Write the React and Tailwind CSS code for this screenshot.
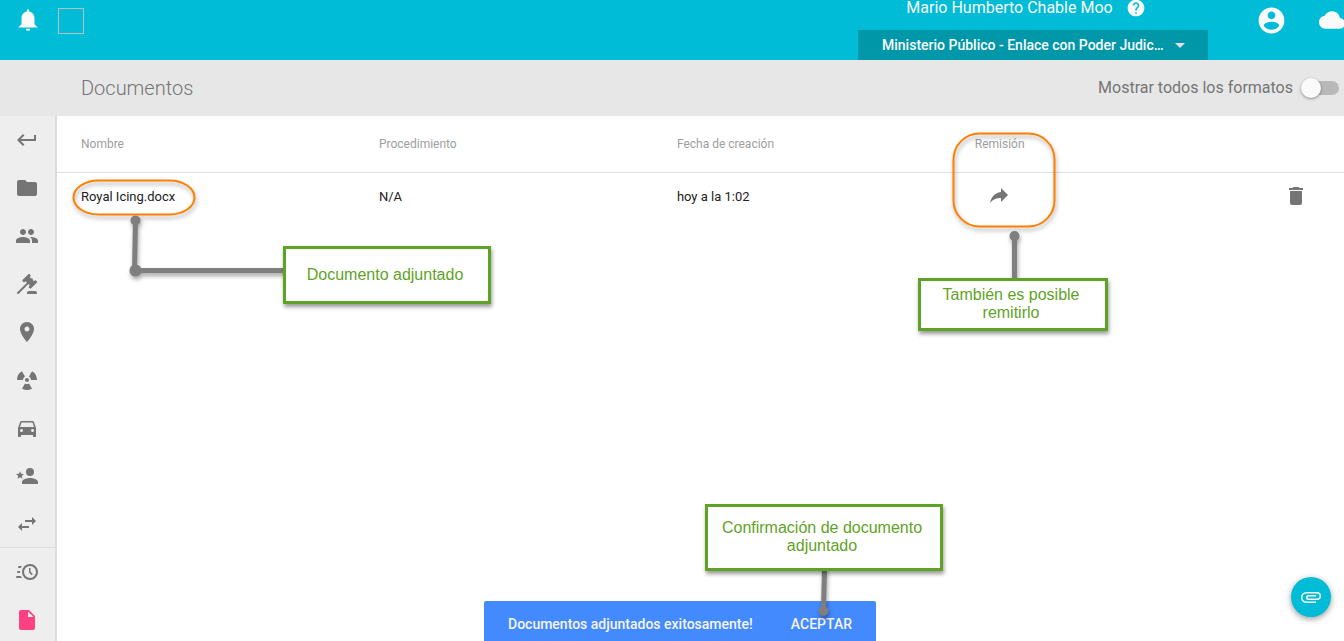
import React from "react";

const PATHS = {
  bell: "M14,20A2,2 0 0,1 12,22A2,2 0 0,1 10,20H14M12,2A1,1 0 0,1 13,3V4.08C15.84,4.56 18,7.03 18,10V16L21,19H3L6,16V10C6,7.03 8.16,4.56 11,4.08V3A1,1 0 0,1 12,2Z",
  help: "M12 2C6.48 2 2 6.48 2 12s4.48 10 10 10 10-4.48 10-10S17.52 2 12 2zm1 17h-2v-2h2v2zm2.07-7.75l-.9.92C13.45 12.9 13 13.5 13 15h-2v-.5c0-1.1.45-2.1 1.17-2.83l1.24-1.26c.37-.36.59-.86.59-1.41 0-1.1-.9-2-2-2s-2 .9-2 2H8c0-2.21 1.79-4 4-4s4 1.79 4 4c0 .88-.36 1.68-.93 2.25z",
  account: "M12 2C6.48 2 2 6.48 2 12s4.48 10 10 10 10-4.48 10-10S17.52 2 12 2zm0 3c1.66 0 3 1.34 3 3s-1.34 3-3 3-3-1.34-3-3 1.34-3 3-3zm0 14.2c-2.5 0-4.71-1.28-6-3.22.03-1.99 4-3.08 6-3.08 1.99 0 5.97 1.09 6 3.08-1.29 1.94-3.5 3.22-6 3.22z",
  cloud: "M19.35 10.04C18.67 6.59 15.64 4 12 4 9.11 4 6.6 5.64 5.35 8.04 2.34 8.36 0 10.91 0 14c0 3.31 2.69 6 6 6h13c2.76 0 5-2.24 5-5 0-2.64-2.05-4.78-4.65-4.96z",
  enter: "M19 7v4H5.83l3.58-3.59L8 6l-6 6 6 6 1.41-1.41L5.83 13H21V7z",
  folder: "M10 4H4c-1.1 0-1.99.9-1.99 2L2 18c0 1.1.9 2 2 2h16c1.1 0 2-.9 2-2V8c0-1.1-.9-2-2-2h-8l-2-2z",
  people: "M16 11c1.66 0 2.99-1.34 2.99-3S17.66 5 16 5c-1.66 0-3 1.34-3 3s1.34 3 3 3zm-8 0c1.66 0 2.99-1.34 2.99-3S9.66 5 8 5C6.34 5 5 6.34 5 8s1.34 3 3 3zm0 2c-2.33 0-7 1.17-7 3.5V19h14v-2.5c0-2.33-4.67-3.5-7-3.5zm8 0c-.29 0-.62.02-.97.05 1.16.84 1.97 1.97 1.97 3.45V19h6v-2.5c0-2.33-4.67-3.5-7-3.5z",
  gavel: "M2.3,20.28L11.9,10.68L10.5,9.26L9.78,9.97C9.39,10.36 8.76,10.36 8.37,9.97L7.66,9.26C7.27,8.87 7.27,8.24 7.66,7.85L13.32,2.19C13.71,1.8 14.34,1.8 14.73,2.19L15.44,2.9C15.83,3.29 15.83,3.92 15.44,4.31L14.73,5L16.15,6.43C16.54,6.04 17.17,6.04 17.56,6.43C17.95,6.82 17.95,7.46 17.56,7.85L18.97,9.26L19.68,8.55C20.07,8.16 20.71,8.16 21.1,8.55L21.8,9.26C22.19,9.65 22.19,10.29 21.8,10.68L16.14,16.34C15.75,16.73 15.12,16.73 14.73,16.34L14.03,15.63C13.63,15.24 13.63,14.6 14.03,14.21L14.73,13.5L13.32,12.09L3.71,21.7C3.32,22.09 2.69,22.09 2.3,21.7C1.91,21.31 1.91,20.67 2.3,20.28M20,19A2,2 0 0,1 22,21V22H12V21A2,2 0 0,1 14,19H20Z",
  place: "M12 2C8.13 2 5 5.13 5 9c0 5.25 7 13 7 13s7-7.75 7-13c0-3.87-3.13-7-7-7zm0 9.5c-1.38 0-2.5-1.12-2.5-2.5s1.12-2.5 2.5-2.5 2.5 1.12 2.5 2.5-1.12 2.5-2.5 2.5z",
  radioactive: "M12,10A2,2 0 1,1 12,14A2,2 0 1,1 12,10ZM22,12A10,10 0 0,0 17,3.34L14,8.54A4,4 0 0,1 16,12ZM2,12A10,10 0 0,1 7,3.34L10,8.54A4,4 0 0,0 8,12ZM7,20.66A10,10 0 0,0 17,20.66L14,15.46A4,4 0 0,1 10,15.46Z",
  car: "M18.92 6.01C18.72 5.42 18.16 5 17.5 5h-11c-.66 0-1.21.42-1.42 1.01L3 12v8c0 .55.45 1 1 1h1c.55 0 1-.45 1-1v-1h12v1c0 .55.45 1 1 1h1c.55 0 1-.45 1-1v-8l-2.08-5.99zM6.5 16c-.83 0-1.5-.67-1.5-1.5S5.67 13 6.5 13s1.5.67 1.5 1.5S7.33 16 6.5 16zm11 0c-.83 0-1.5-.67-1.5-1.5s.67-1.5 1.5-1.5 1.5.67 1.5 1.5-.67 1.5-1.5 1.5zM5 11l1.5-4.5h11L19 11H5z",
  accountStar: "M15,14C12.33,14 7,15.33 7,18V20H23V18C23,15.33 17.67,14 15,14M15,12A4,4 0 0,0 19,8A4,4 0 0,0 15,4A4,4 0 0,0 11,8A4,4 0 0,0 15,12M5,13.28L7.45,14.77L6.8,11.96L9,10.08L6.11,9.83L5,7.19L3.87,9.83L1,10.08L3.18,11.96L2.5,14.77L5,13.28Z",
  swap: "M21,9L17,5V8H10V10H17V13M7,11L3,15L7,19V16H14V14H7V11Z",
  clockFast: "M15,4A8,8 0 0,1 23,12A8,8 0 0,1 15,20A8,8 0 0,1 7,12A8,8 0 0,1 15,4M15,6A6,6 0 0,0 9,12A6,6 0 0,0 15,18A6,6 0 0,0 21,12A6,6 0 0,0 15,6M14,8H15.5V11.78L17.83,14.11L16.77,15.17L14,12.4V8M2,18A1,1 0 0,1 1,17A1,1 0 0,1 2,16H5.83C6.14,16.71 6.54,17.38 7,18H2M3,13A1,1 0 0,1 2,12A1,1 0 0,1 3,11H5.05L5,12L5.05,13H3M4,8A1,1 0 0,1 3,7A1,1 0 0,1 4,6H7C6.54,6.62 6.14,7.29 5.83,8H4Z",
  file: "M13,9V3.5L18.5,9M6,2C4.89,2 4,2.89 4,4V20A2,2 0 0,0 6,22H18A2,2 0 0,0 20,20V8L14,2H6Z",
  share: "M21,11L14,4V8C7,9 4,14 3,19C5.5,15.5 9,13.9 14,13.9V18L21,11Z",
  trash: "M19,4H15.5L14.5,3H9.5L8.5,4H5V6H19M6,19A2,2 0 0,0 8,21H16A2,2 0 0,0 18,19V7H6V19Z",
  attachment: "M7.5,18A5.5,5.5 0 0,1 2,12.5A5.5,5.5 0 0,1 7.5,7H18A4,4 0 0,1 22,11A4,4 0 0,1 18,15H9.5A2.5,2.5 0 0,1 7,12.5A2.5,2.5 0 0,1 9.5,10H17V11.5H9.5A1,1 0 0,0 8.5,12.5A1,1 0 0,0 9.5,13.5H18A2.5,2.5 0 0,0 20.5,11A2.5,2.5 0 0,0 18,8.5H7.5A4,4 0 0,0 3.5,12.5A4,4 0 0,0 7.5,16.5H17V18H7.5Z",
};

function Icon({ name, className = "size-6" }) {
  return (
    <svg viewBox="0 0 24 24" fill="currentColor" aria-hidden="true" className={`block shrink-0 ${className}`}>
      <path d={PATHS[name]} />
    </svg>
  );
}

const NAV = [
  ["enter", "Regresar"],
  ["folder", "Carpeta"],
  ["people", "Personas"],
  ["gavel", "Delitos"],
  ["place", "Lugares"],
  ["radioactive", "Evidencias"],
  ["car", "Vehículos"],
  ["accountStar", "Entrevistas"],
  ["swap", "Relaciones"],
  ["clockFast", "Actuaciones"],
  ["file", "Documentos"],
];

function Header() {
  return (
    <header className="flex h-[60px] shrink-0 bg-[#00bcd7] text-[#fafafa]">
      <div className="flex flex-1 items-start gap-[17px] pt-[7px] pl-[15px]">
        <button type="button" aria-label="Notificaciones">
          <Icon name="bell" className="size-[26px]" />
        </button>
        <div className="mt-px size-[26px] border border-[#b9bfc0]" />
      </div>
      <div className="flex w-[350px] flex-col justify-between">
        <div className="flex h-4 items-center justify-center gap-[13px] pr-[14px]">
          <span className="text-base leading-4">Mario Humberto Chable Moo</span>
          <button type="button" aria-label="Ayuda">
            <Icon name="help" className="size-5" />
          </button>
        </div>
        <button type="button" className="flex h-[30px] items-center justify-between bg-[#0097a9] pr-[23px] pl-6 text-sm font-medium">
          <span>Ministerio Público - Enlace con Poder Judic…</span>
          <svg viewBox="0 0 10 5" className="h-[5px] w-[10px] text-[#e0e0e0]" fill="currentColor" aria-hidden="true">
            <path d="M0 0h10L5 5z" />
          </svg>
        </button>
      </div>
      <div className="flex w-[136px] shrink-0 items-start overflow-hidden pl-[48px]">
        <button type="button" aria-label="Cuenta" className="mt-[5px] shrink-0">
          <Icon name="account" className="size-[31px]" />
        </button>
        <button type="button" aria-label="Nube" className="mt-[7px] ml-8 shrink-0">
          <Icon name="cloud" className="size-[26px]" />
        </button>
      </div>
    </header>
  );
}

function Toolbar() {
  return (
    <div className="flex h-14 shrink-0 items-center justify-between bg-[#e7e7e7] pr-[5px] pl-[81px]">
      <h1 className="text-xl font-light text-[#757575]">Documentos</h1>
      <label className="flex items-center gap-2 text-base text-[#757575]">
        Mostrar todos los formatos
        <span className="relative flex h-5 w-[38px] items-center">
          <input type="checkbox" role="switch" className="peer absolute inset-0 m-0 cursor-pointer opacity-0" />
          <span className="ml-[2px] h-[14px] w-9 rounded-full bg-[#b9b9b9]" />
          <span className="absolute left-0 size-5 rounded-full bg-[#fafafa] shadow-[0_1px_3px_rgba(0,0,0,0.4)] peer-checked:left-[18px]" />
        </span>
      </label>
    </div>
  );
}

function Sidebar() {
  return (
    <nav className="w-[57px] shrink-0 border-r-2 border-[#dcdcdc] bg-[#eeeeee]">
      <ul>
        {NAV.map(([name, label]) => (
          <li key={name} className={name === "swap" ? "border-b border-[#dcdcdc]" : ""}>
            <a
              href={`#${name}`}
              aria-label={label}
              className={`flex items-center pl-[15px] ${name === "swap" ? "h-[47px]" : "h-12"} ${
                name === "file" ? "text-[#ff4081]" : "text-[#757575]"
              }`}
            >
              <Icon name={name} />
            </a>
          </li>
        ))}
      </ul>
    </nav>
  );
}

function Documents() {
  return (
    <table className="w-full table-fixed text-left">
      <thead>
        <tr className="h-14 border-b border-[#e0e0e0] text-xs text-[#9e9e9e]">
          <th className="w-[23.15%] pl-6 font-normal">Nombre</th>
          <th className="w-[23.15%] pl-6 font-normal">Procedimiento</th>
          <th className="w-[23.15%] pl-6 font-normal">Fecha de creación</th>
          <th className="w-[23.15%] pl-6 font-normal">Remisión</th>
          <td />
        </tr>
      </thead>
      <tbody>
        <tr className="h-12 text-[13px] text-[#212121]">
          <td className="pl-6">Royal Icing.docx</td>
          <td className="pl-6">N/A</td>
          <td className="pl-6">hoy a la 1:02</td>
          <td className="pl-9">
            <button type="button" aria-label="Remitir" className="block text-[#757575]">
              <Icon name="share" />
            </button>
          </td>
          <td className="pr-9">
            <button type="button" aria-label="Eliminar" className="ml-auto block text-[#757575]">
              <Icon name="trash" />
            </button>
          </td>
        </tr>
      </tbody>
    </table>
  );
}

function Callout({ className, children }) {
  return (
    <div
      className={`absolute flex justify-center border-3 border-[#5fa326] bg-white text-center font-['Liberation_Sans',sans-serif] text-base leading-[18px] text-[#5fa326] shadow-[1px_3px_4px_rgba(0,0,0,0.4)] ${className}`}
    >
      {children}
    </div>
  );
}

function Connectors() {
  return (
    <svg className="pointer-events-none absolute top-0 left-0 h-[641px] w-[1344px] drop-shadow-[1px_3px_2px_rgba(0,0,0,0.35)]" aria-hidden="true">
      <g stroke="#7f7f7f" strokeWidth="5" fill="none">
        <path d="M135.5 220.5L134.5 270.5H286" />
        <path d="M1014.5 236V280" />
        <path d="M824.5 568L823.5 610" />
      </g>
      <g fill="#7f7f7f">
        <circle cx="135.5" cy="220.5" r="5" />
        <circle cx="135.5" cy="270.5" r="6" />
        <circle cx="1014.5" cy="236" r="5" />
        <circle cx="823.5" cy="611" r="5" />
      </g>
      <g stroke="#ff8000" strokeWidth="2" fill="none">
        <rect x="73.5" y="180.5" width="121" height="34" rx="25" ry="17" />
        <rect x="953.5" y="133.5" width="101" height="93" rx="26" />
      </g>
    </svg>
  );
}

export default function App() {
  return (
    <div className="relative flex h-screen flex-col overflow-hidden bg-white font-[Roboto,sans-serif]">
      <Header />
      <Toolbar />
      <div className="flex min-h-0 flex-1">
        <Sidebar />
        <main className="min-w-0 flex-1">
          <Documents />
        </main>
      </div>

      <div role="status" className="absolute bottom-0 left-[484px] flex h-10 w-[392px] items-center justify-between rounded-t-xs bg-[#448aff] pt-[6px] pr-6 pl-6 text-sm font-medium text-[#f5f5f5]">
        <span>Documentos adjuntados exitosamente!</span>
        <button type="button">ACEPTAR</button>
      </div>
      <button
        type="button"
        aria-label="Adjuntar"
        className="absolute right-[13px] bottom-6 flex size-10 items-center justify-center rounded-full bg-[#00bcd7] text-[#fafafa] shadow-[0_2px_6px_rgba(0,0,0,0.4)]"
      >
        <Icon name="attachment" />
      </button>

      <Connectors />
      <Callout className="top-[246px] left-[283px] h-[58px] w-[208px] items-center pr-1">Documento adjuntado</Callout>
      <Callout className="top-[278px] left-[918px] h-[53px] w-[190px] pt-[5px] pr-5 pl-4">También es posible remitirlo</Callout>
      <Callout className="top-[504px] left-[705px] h-[67px] w-[238px] pt-3 pr-4 pl-3">Confirmación de documento adjuntado</Callout>
    </div>
  );
}
